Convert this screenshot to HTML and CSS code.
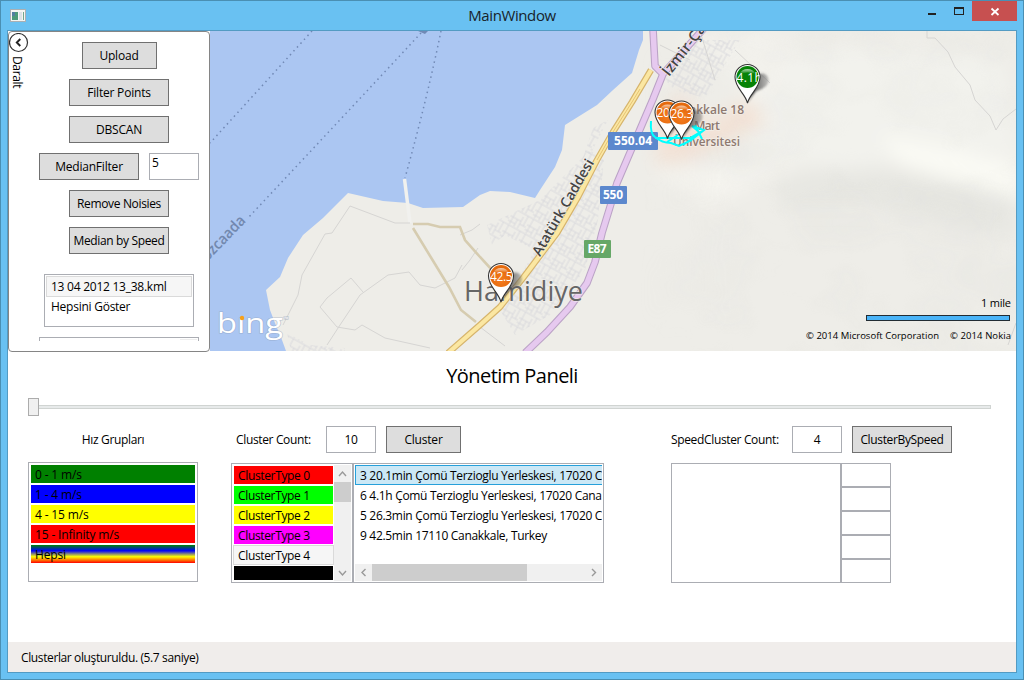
FILE: index.html
```html
<!DOCTYPE html>
<html lang="tr">
<head>
<meta charset="utf-8">
<title>MainWindow</title>
<link rel="stylesheet" href="styles.css">
</head>
<body>
<div class="window">
  <header class="titlebar">
    <svg class="app-icon" width="16" height="14" viewBox="0 0 16 14"><rect x=".5" y=".5" width="15" height="12" fill="#f5f5f2" stroke="#aab0b4"/><rect x="2" y="3" width="6" height="8" fill="#4d9a79"/><rect x="2" y="3" width="3" height="4" fill="#527f9f"/><rect x="9" y="3" width="3" height="8" fill="#dce2e6"/><rect x="13" y="3" width="1" height="8" fill="#73a68f"/></svg>
    <h1 class="title">MainWindow</h1>
    <div class="caption">
      <svg width="100" height="20" viewBox="0 0 100 20"><rect x="6" y="12" width="8" height="2" fill="#222"/><path d="M32 6h10v8H32zM33 8v5h8V8z" fill="#222" fill-rule="evenodd"/><rect x="50" width="45" height="20" fill="#c75050"/><path d="M69.5 7.500l7 6.500M76.500 7.500l-7 6.500" stroke="#fff" stroke-width="1.800"/></svg>
    </div>
  </header>
  <main class="client">
    <section class="top">
      <aside class="panel">
        <div class="expander">
          <svg width="20" height="20" viewBox="0 0 20 20"><circle cx="9.500" cy="9.500" r="9" fill="#fff" stroke="#333" stroke-width="1.200"/><path d="M11.300 6L7.800 9.500l3.500 3.500" fill="none" stroke="#222" stroke-width="1.900"/></svg>
          <span class="vertical">Daralt</span>
        </div>
        <div class="tools">
          <button class="btn narrow">Upload</button>
          <button class="btn">Filter Points</button>
          <button class="btn">DBSCAN</button>
          <div class="median"><button class="btn">MedianFilter</button><div class="field topleft">5</div></div>
          <button class="btn tight">Remove Noisies</button>
          <button class="btn tight">Median by Speed</button>
          <div class="files"><div class="file chosen">13 04 2012 13_38.kml</div><div class="file">Hepsini Göster</div></div>
          <div class="cut"><i></i></div>
        </div>
      </aside>
      <svg class="map" viewBox="210 31 806 320" width="806" height="320">
        <defs>
          <filter id="soft" x="-30%" y="-30%" width="160%" height="160%"><feGaussianBlur stdDeviation="9"/></filter>
          <filter id="shade" x="-50%" y="-50%" width="200%" height="200%"><feGaussianBlur stdDeviation="1"/></filter>
          <filter id="relief" x="0" y="0" width="100%" height="100%"><feTurbulence type="fractalNoise" baseFrequency=".012 .016" numOctaves="3" seed="8"/><feColorMatrix values="0 0 0 0 .66  0 0 0 0 .66  0 0 0 0 .64  .9 0 0 0 -.36"/></filter>
          <linearGradient id="fade"><stop offset="0" stop-color="#000"/><stop offset=".25" stop-color="#fff"/></linearGradient>
          <mask id="east"><rect x="640" y="31" width="376" height="320" fill="url(#fade)"/></mask>
          <pattern id="streets" width="19" height="17" patternUnits="userSpaceOnUse" patternTransform="rotate(29)"><path d="M0 1H19M0 9H12M3 1V17M12 4V17M8 9V17M16 1V12M12 12H19M0 14H8" fill="none" stroke="#d6d6da" stroke-width=".8"/></pattern>
          <radialGradient id="orange" cy=".7"><stop offset="0" stop-color="#f47b20"/><stop offset="1" stop-color="#e56a0c"/></radialGradient>
          <linearGradient id="gloss" x2="0" y2="1"><stop offset="0" stop-color="#fff" stop-opacity=".65"/><stop offset="1" stop-color="#fff" stop-opacity="0"/></linearGradient>
          <linearGradient id="cast" x1="0" x2="1"><stop offset="0" stop-color="#222" stop-opacity=".95"/><stop offset="1" stop-color="#777" stop-opacity=".45"/></linearGradient>
          <g id="pin-shadow"><path d="M0 26C5 17 4 12 7 2C11-7 21-4 21 3C21 10 14 12 9 14C6 17 3 21 0 26Z" fill="url(#cast)" filter="url(#shade)"/></g>
          <path id="pin-body" d="M0 26C-2.500 16-12.500 11-12.500 0A12.500 12.500 0 0 1 12.500 0C12.500 11 2.500 16 0 26Z" fill="#fff" stroke="#333" stroke-width="1.100"/>
          <path id="pin-gloss" d="M-8-3A9 9 0 0 1 8-3Q0-6-8-3Z" fill="url(#gloss)"/>
          <clipPath id="head"><circle r="12"/></clipPath>
        </defs>
        <rect x="210" y="31" width="806" height="320" fill="#eeede8"/>
        <g filter="url(#soft)">
          <path d="M740 60L860 45L1000 60L1020 160L960 150L850 170L740 150Z" fill="#f2f2ed"/>
          <path d="M880 135L960 150L1020 165V205L900 165Z" fill="#fafaf4"/>
          <path d="M780 180Q880 150 1016 200V240L870 205L780 205Z" fill="#e7e7e2"/>
          <path d="M660 125L680 90L705 125L748 98L768 122L690 160L655 165Z" fill="#f3e2d6"/>
          <path d="M675 45L715 60L780 110L800 45L750 28Z" fill="#f3f2ed"/>
          <path d="M650 170L800 162L710 205L680 185Z" fill="#f6f5f0"/>
        </g>
        <g mask="url(#east)"><rect x="640" y="31" width="376" height="320" filter="url(#relief)" opacity=".35"/></g>
        <path d="M210 31H643V40L639 50L632 73L613 90L597 105L565 125L562 150L555 167L540 190L535 198L510 192L490 191L480 195L463 207L423 208L408 203L383 201L348 193L323 218L303 235L288 258L280 277L266 290L270 310L275 323L282 340L286 351H210Z" fill="#abc6f2"/>
        <path d="M404.500 179L410 223" stroke="#f1f1ee" stroke-width="3.500"/>
        <g fill="none" stroke="#7189b5" stroke-width="1.500" stroke-dasharray="1.500 3.700"><path d="M312 31L210 143M421 33Q340 120 248 218M441 31Q428 95 405 178"/></g>
        <path d="M418 31L428 31L425 34Z" fill="#7189b5"/>
        <path d="M487 225L540 200L560 180L590 150L604 160L598 220L585 270L550 315L515 335L500 310L535 250L505 235L492 245Z" fill="url(#streets)"/>
        <path d="M593 128L608 120L590 155L577 175ZM690 40H740L705 98L675 90L665 80ZM287 333L310 345L345 348V351H291Z" fill="url(#streets)"/>
        <g fill="none" stroke="#d6d5d3" stroke-width="1">
          <path d="M410 223L395 223L350 206L332 233L325 234L302 275L298 295L283 325M462 265L455 278L435 288L420 285L409 272L388 275L360 295L340 325L327 345M320 307L337 327L355 330L362 325L385 338L430 348M320 307L327 298L351 278L363 292M460 235L472 230L480 224M462 270L470 260L478 248M927 31V38H935L948 52L955 67L970 85L975 100L990 116L996 130L1003 119L1016 109M1016 323L1008 345M660 45L690 60M480 327L505 346M700 31L715 80M735 50L770 83"/>
        </g>
        <g fill="none" stroke="#d6ccb0" stroke-width="2.600"><path d="M413 224H428L440 227L460 227L465 240L480 257L492 270M413 228L449 287L461 310L476 322"/></g>
        <g fill="none" stroke-linejoin="round">
          <path d="M653 29L655 66L663 74L706 26M663 74L653 99L617 183L610 207L602 233L595 262L587 283L570 307L547 332L525 353" stroke="#bba3c6" stroke-width="7.600"/>
          <path d="M653 29L655 66L663 74L706 26M663 74L653 99L617 183L610 207L602 233L595 262L587 283L570 307L547 332L525 353" stroke="#e6c9ef" stroke-width="5.500"/>
          <path d="M651 70L632 102L613 132L597 160L578 197L557 233L523 278L500 307L480 325L448 353" stroke="#d6b46c" stroke-width="6.500"/>
          <path d="M651 70L632 102L613 132L597 160L578 197L557 233L523 278L500 307L480 325L448 353" stroke="#fbe7a2" stroke-width="4.200"/>
          <path d="M640 89L632 102L613 132L597 160" stroke="#dfb968" stroke-width=".8"/>
        </g>
        <g class="map-label">
          <text transform="translate(211 258) rotate(-46)" x="-5" font-size="15" textLength="56" lengthAdjust="spacingAndGlyphs" fill="#7288ae" stroke="none">ozcaada</text>
          <text transform="translate(540 257) rotate(-60)" font-size="14" textLength="109" lengthAdjust="spacingAndGlyphs" fill="#444">Atatürk Caddesi</text>
          <text transform="translate(669 77) rotate(-52)" font-size="15" textLength="71" fill="#444">İzmir-Çan</text>
          <text x="464" y="301" font-size="27" textLength="119" lengthAdjust="spacingAndGlyphs" fill="#666" font-weight="500">Hamidiye</text>
          <g font-size="12.500" fill="#8e7970"><text x="667" y="114" textLength="77" lengthAdjust="spacingAndGlyphs">Çanakkale 18</text><text x="694" y="130" textLength="26">Mart</text><text x="673" y="146" textLength="67" lengthAdjust="spacingAndGlyphs">Üniversitesi</text></g>
        </g>
        <g class="shield"><rect x="608" y="132" width="50" height="18" rx="1" fill="#5c88cd"/><rect x="600" y="186" width="27" height="18" rx="1" fill="#5c88cd"/><rect x="584" y="240" width="27" height="18" rx="1" fill="#66a767"/><text x="614" y="145" textLength="38">550.04</text><text x="603" y="199" textLength="20">550</text><text x="587.500" y="253" textLength="19">E87</text></g>
        <g fill="none" stroke="#0ff" stroke-width="2"><path d="M651 121Q650 134 655 137Q662 143 671 143L679 146L690 141L704 130L692 126L699 132M655 138L690 138L704 130L683 145M667 142L678 135M695 125L702 139"/></g>
        <g class="pin">
          <g transform="translate(747.500 77)"><use href="#pin-shadow"/><use href="#pin-body"/><circle r="11" fill="#078307"/><use href="#pin-gloss"/><g clip-path="url(#head)"><text x="-11" y="4.500" textLength="25">4.1h</text></g></g>
          <g transform="translate(667.500 112.500)"><use href="#pin-shadow"/><use href="#pin-body"/><circle r="11" fill="url(#orange)"/><use href="#pin-gloss"/><g clip-path="url(#head)"><text x="-11" y="4.500">20.1</text></g></g>
          <g transform="translate(681.500 113.500)"><use href="#pin-shadow"/><use href="#pin-body"/><circle r="11" fill="url(#orange)"/><use href="#pin-gloss"/><g clip-path="url(#head)"><text x="-11" y="4.500">26.3</text></g></g>
          <g transform="translate(501 276)"><use href="#pin-shadow"/><use href="#pin-body"/><circle r="11" fill="url(#orange)"/><use href="#pin-gloss"/><g clip-path="url(#head)"><text x="-11" y="4.500">42.5</text></g></g>
        </g>
        <g class="bing"><text x="217" y="333" textLength="66" lengthAdjust="spacingAndGlyphs">bıng</text><circle cx="242" cy="318" r="2.200" fill="#f5a01a"/><text x="284" y="321" class="tm">™</text></g>
        <text class="legend" x="981" y="307" font-size="11" textLength="30">1 mile</text>
        <rect x="866.500" y="315.500" width="143" height="5" fill="#4ab4f8" stroke="#222c33"/>
        <text class="legend" x="806" y="339" font-size="9.500" textLength="133">© 2014 Microsoft Corporation</text>
        <text class="legend" x="950" y="339" font-size="9.500" textLength="61">© 2014 Nokia</text>
      </svg>
    </section>
    <section class="management">
      <h2>Yönetim Paneli</h2>
      <div class="slider"><div class="track"></div><div class="thumb"></div></div>
      <div class="groups">
        <div class="speed">
          <div class="speed-title">Hız Grupları</div>
          <div class="speed-list"><div class="row green">0 - 1 m/s</div><div class="row blue">1 - 4 m/s</div><div class="row yellow">4 - 15 m/s</div><div class="row red">15 - Infinity m/s</div><div class="row rainbow">Hepsi</div></div>
        </div>
        <div class="clusters">
          <div class="controls"><span class="count-label">Cluster Count:</span><div class="field">10</div><button class="btn narrow">Cluster</button></div>
          <div class="lists">
            <div class="types">
              <div class="type-rows"><div class="row red">ClusterType 0</div><div class="row lime">ClusterType 1</div><div class="row yellow">ClusterType 2</div><div class="row magenta">ClusterType 3</div><div class="row plain">ClusterType 4</div><div class="row black"></div></div>
              <svg class="vscroll" width="17" height="116" viewBox="0 0 17 116"><rect width="17" height="116" fill="#f0f0f0"/><rect y="17" width="17" height="20" fill="#cdcdcd"/><path d="M5 11l3.500-4 3.500 4M5 106l3.500 4 3.500-4" fill="none" stroke="#999" stroke-width="1.400"/></svg>
            </div>
            <div class="places">
              <div class="place chosen">3 20.1min Çomü Terzioglu Yerleskesi, 17020 Canakkale</div>
              <div class="place">6 4.1h Çomü Terzioglu Yerleskesi, 17020 Canakkale</div>
              <div class="place">5 26.3min Çomü Terzioglu Yerleskesi, 17020 Canakkale</div>
              <div class="place">9 42.5min 17110 Canakkale, Turkey</div>
              <svg class="hscroll" width="247" height="17" viewBox="0 0 247 17"><rect width="247" height="17" fill="#f0f0f0"/><rect x="17" width="155" height="17" fill="#cdcdcd"/><path d="M10.500 5L7 8.500l3.500 3.500M237 5l3.500 3.500-3.500 3.500" fill="none" stroke="#999" stroke-width="1.400"/></svg>
            </div>
          </div>
        </div>
        <div class="speed-clusters">
          <div class="controls"><span class="speed-label">SpeedCluster Count:</span><div class="field">4</div><button class="btn tight">ClusterBySpeed</button></div>
          <div class="results"><div class="result-list"></div><div class="cells"><i></i><i></i><i></i><i></i><i></i></div></div>
        </div>
      </div>
    </section>
    <footer class="status">Clusterlar oluşturuldu. (5.7 saniye)</footer>
  </main>
</div>
</body>
</html>
```
FILE: styles.css
```css
* { box-sizing: border-box; }
body { margin: 0; overflow: hidden; font: 12px/16px "Open Sans", "Noto Sans", sans-serif; letter-spacing: -.35px; color: #000; }
.window { width: 1024px; height: 680px; display: flex; flex-direction: column; padding: 0 6px 6px; background: #69c1f2; border: 1px solid #4a8fb3; }
.titlebar { height: 29px; flex: none; display: grid; grid-template-columns: 100px 1fr 100px; }
.app-icon { margin: 8px 0 0 3px; }
.title { margin: 3px 0 0; font: 15px/22px "Open Sans", sans-serif; letter-spacing: -.4px; text-align: center; color: #18232a; }
.caption { margin: 0 -6px 0 5px; }
.client { flex: 1; display: flex; flex-direction: column; border: 1px solid #539bc3; background: #fff; overflow: hidden; }
.top { height: 321px; flex: none; display: flex; }
.panel { width: 202px; height: 321px; flex: none; display: flex; border: 1px solid #858585; border-radius: 4px; background: #fff; }
.map { display: block; flex: none; height: 320px; }
.expander { width: 20px; flex: none; }
.expander svg { display: block; margin-top: 1px; }
.vertical { display: block; margin: 3px 0 0; writing-mode: vertical-rl; line-height: 16px; }
.tools { width: 160px; margin: 10px 0 0 10px; display: flex; flex-direction: column; align-items: center; gap: 10px; }
.btn { width: 100px; height: 27px; flex: none; padding: 1px 0 0; border: 1px solid #707070; border-radius: 0; background: #ddd; color: #000; font: inherit; letter-spacing: -.2px; white-space: nowrap; }
.btn.narrow { width: 75px; }
.btn.tight { letter-spacing: -.35px; }
.median { width: 160px; display: flex; gap: 10px; }
.field { width: 50px; height: 27px; display: flex; align-items: center; justify-content: center; padding-top: 1px; border: 1px solid #abadb3; }
.field.topleft { align-items: flex-start; justify-content: flex-start; padding: 1px 2px; }
.files { width: 150px; height: 53px; margin-top: 10px; padding: 1px; border: 1px solid #abadb3; }
.file { height: 20px; padding: 1px 5px; border: 1px solid transparent; letter-spacing: -.25px; line-height: 17px; text-indent: -1px; }
.file.chosen { height: 21px; border-color: #dadada; background: #f6f6f6; }
.file:last-child { padding-top: 0; }
.cut { width: 160px; height: 4px; border: 1px solid #abadb3; border-bottom: 0; display: flex; justify-content: flex-end; padding: 1px; }
.cut i { width: 17px; background: #eee; }
.map-label { font-family: "Open Sans", sans-serif; font-weight: 600; fill: #555; paint-order: stroke; stroke: #f4f2ed; stroke-width: 1.5px; stroke-opacity: .7; letter-spacing: 0; }
.shield { font: bold 12px "Open Sans", sans-serif; fill: #fff; letter-spacing: 0; }
.pin { font: 12px "Open Sans", sans-serif; fill: #fff; }
.pin text { fill: #fff; }
.bing { font: 500 28px "Open Sans", sans-serif; fill: #fff; paint-order: stroke; stroke: #8796b0; stroke-width: 1.2px; stroke-opacity: .5; letter-spacing: 0; }
.bing circle { stroke: none; }
.bing .tm { font-size: 6px; }
.legend { font-family: "Open Sans", sans-serif; fill: #000; letter-spacing: 0; }
.management { flex: 1; }
.management h2 { height: 46px; margin: 0; padding-top: 9px; text-align: center; font: 20px/30px "Open Sans", sans-serif; letter-spacing: -.55px; }
.slider { width: 963px; height: 18px; margin-left: 20px; display: grid; align-items: center; }
.track, .thumb { grid-area: 1 / 1; }
.track { height: 4px; border: 1px solid #d0d4d2; background: #e7eaea; }
.thumb { width: 11px; height: 18px; background: #f0f0f0; border: 1px solid #acacac; }
.groups { margin: 10px 0 0 20px; display: flex; }
.speed { width: 203px; }
.speed-title { width: 170px; height: 36px; padding-top: 6px; text-align: center; }
.speed-list { width: 170px; height: 120px; padding: 2px; border: 1px solid #abadb3; display: flex; flex-direction: column; gap: 2px; }
.row { height: 18px; flex: none; padding-left: 4px; line-height: 20px; letter-spacing: -.15px; }
.green { background: #008000; } .blue { background: #00f; } .yellow { background: #ff0; } .red { background: #f00; } .lime { background: #0f0; } .magenta { background: #f0f; } .black { background: #000; }
.rainbow { background: linear-gradient(#008000, #00f 32%, #ff0 65%, #f00); }
.plain { background: #f6f6f6; outline: 1px solid #dadada; }
.clusters { width: 440px; }
.controls { height: 27px; display: flex; align-items: center; gap: 10px; }
.count-label { width: 80px; margin-left: 5px; padding-top: 1px; letter-spacing: -.35px; }
.lists { display: flex; margin-top: 10px; }
.types { width: 122px; height: 120px; padding: 1px; border: 1px solid #abadb3; display: flex; }
.type-rows { width: 101px; height: 115px; padding: 1px; display: flex; flex-direction: column; gap: 2px; overflow: hidden; }
.vscroll { flex: none; }
.type-rows .row { letter-spacing: -.35px; }
.places { width: 251px; height: 120px; padding: 1px; border: 1px solid #abadb3; overflow: hidden; }
.place { width: 247px; height: 20px; padding-left: 5px; line-height: 21px; white-space: nowrap; overflow: hidden; letter-spacing: -.31px; }
.place.chosen { padding-left: 4px; border: 1px solid #26a0da; border-right: 0; background: #cbe8f6; line-height: 19px; }
.hscroll { display: block; margin-top: 19px; }
.speed-label { width: 111px; padding-top: 1px; }
.results { display: flex; margin-top: 10px; }
.result-list { width: 170px; height: 120px; border: 1px solid #abadb3; }
.cells { width: 50px; }
.cells i { display: block; height: 24px; border: 1px solid #abadb3; }
.status { height: 30px; flex: none; padding: 8px 13px; background: #f0edeb; letter-spacing: -.38px; }
```
